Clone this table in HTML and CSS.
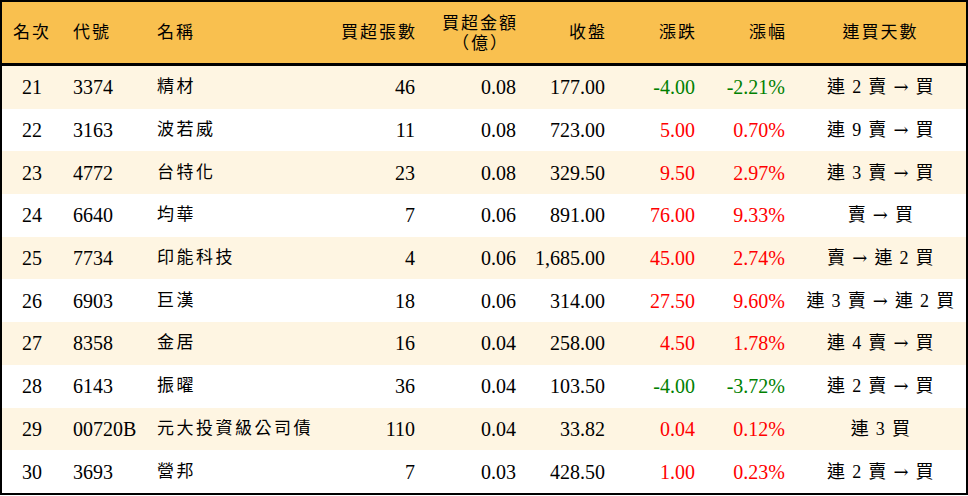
FILE: index.html
```html
<!DOCTYPE html>
<html lang="zh-Hant">
<head>
<meta charset="utf-8">
<link rel="stylesheet" href="styles.css">
</head>
<body>
<table class="board">
  <colgroup>
    <col class="c-rank"><col class="c-code"><col class="c-name"><col class="c-vol"><col class="c-amt"><col class="c-close"><col class="c-chg"><col class="c-pct"><col class="c-days">
  </colgroup>
  <thead>
    <tr>
      <th class="ctr">名次</th>
      <th class="lft">代號</th>
      <th class="lft name">名稱</th>
      <th class="rgt">買超張數</th>
      <th class="rgt two">買超金額<br><span class="unit">（億）</span></th>
      <th class="rgt">收盤</th>
      <th class="rgt">漲跌</th>
      <th class="rgt">漲幅</th>
      <th class="ctr">連買天數</th>
    </tr>
  </thead>
  <tbody>
    <tr><td class="ctr">21</td><td class="lft">3374</td><td class="lft name">精材</td><td class="rgt">46</td><td class="rgt">0.08</td><td class="rgt">177.00</td><td class="rgt down">-4.00</td><td class="rgt down">-2.21%</td><td class="ctr days">連 2 賣 <span class="arr">→</span> 買</td></tr>
    <tr><td class="ctr">22</td><td class="lft">3163</td><td class="lft name">波若威</td><td class="rgt">11</td><td class="rgt">0.08</td><td class="rgt">723.00</td><td class="rgt up">5.00</td><td class="rgt up">0.70%</td><td class="ctr days">連 9 賣 <span class="arr">→</span> 買</td></tr>
    <tr><td class="ctr">23</td><td class="lft">4772</td><td class="lft name">台特化</td><td class="rgt">23</td><td class="rgt">0.08</td><td class="rgt">329.50</td><td class="rgt up">9.50</td><td class="rgt up">2.97%</td><td class="ctr days">連 3 賣 <span class="arr">→</span> 買</td></tr>
    <tr><td class="ctr">24</td><td class="lft">6640</td><td class="lft name">均華</td><td class="rgt">7</td><td class="rgt">0.06</td><td class="rgt">891.00</td><td class="rgt up">76.00</td><td class="rgt up">9.33%</td><td class="ctr days">賣 <span class="arr">→</span> 買</td></tr>
    <tr><td class="ctr">25</td><td class="lft">7734</td><td class="lft name">印能科技</td><td class="rgt">4</td><td class="rgt">0.06</td><td class="rgt">1,685.00</td><td class="rgt up">45.00</td><td class="rgt up">2.74%</td><td class="ctr days">賣 <span class="arr">→</span> 連 2 買</td></tr>
    <tr><td class="ctr">26</td><td class="lft">6903</td><td class="lft name">巨漢</td><td class="rgt">18</td><td class="rgt">0.06</td><td class="rgt">314.00</td><td class="rgt up">27.50</td><td class="rgt up">9.60%</td><td class="ctr days">連 3 賣 <span class="arr">→</span> 連 2 買</td></tr>
    <tr><td class="ctr">27</td><td class="lft">8358</td><td class="lft name">金居</td><td class="rgt">16</td><td class="rgt">0.04</td><td class="rgt">258.00</td><td class="rgt up">4.50</td><td class="rgt up">1.78%</td><td class="ctr days">連 4 賣 <span class="arr">→</span> 買</td></tr>
    <tr><td class="ctr">28</td><td class="lft">6143</td><td class="lft name">振曜</td><td class="rgt">36</td><td class="rgt">0.04</td><td class="rgt">103.50</td><td class="rgt down">-4.00</td><td class="rgt down">-3.72%</td><td class="ctr days">連 2 賣 <span class="arr">→</span> 買</td></tr>
    <tr><td class="ctr">29</td><td class="lft">00720B</td><td class="lft name">元大投資級公司債</td><td class="rgt">110</td><td class="rgt">0.04</td><td class="rgt">33.82</td><td class="rgt up">0.04</td><td class="rgt up">0.12%</td><td class="ctr days">連 3 買</td></tr>
    <tr><td class="ctr">30</td><td class="lft">3693</td><td class="lft name">營邦</td><td class="rgt">7</td><td class="rgt">0.03</td><td class="rgt">428.50</td><td class="rgt up">1.00</td><td class="rgt up">0.23%</td><td class="ctr days">連 2 賣 <span class="arr">→</span> 買</td></tr>
  </tbody>
</table>
</body>
</html>
```
FILE: styles.css
```css
html, body {
  margin: 0;
  padding: 0;
  background: #ffffff;
}

.board {
  border-collapse: separate;
  border-spacing: 0;
  table-layout: fixed;
  width: 968px;
  border: 2px solid #000;
  font-family: "Liberation Serif", "Noto Sans CJK TC", serif;
  font-size: 20px;
  color: #000;
}

.c-rank { width: 60px; }
.c-code { width: 85px; }
.c-name { width: 183px; }
.c-vol { width: 95px; }
.c-amt { width: 101px; }
.c-close { width: 89px; }
.c-chg { width: 90px; }
.c-pct { width: 90px; }
.c-days { width: 171px; }

th, td {
  padding: 0;
  white-space: nowrap;
  overflow: hidden;
}

thead th {
  background: #f9c04f;
  height: 59px;
  border-bottom: 3px solid #000;
  font-weight: normal;
  font-size: 17px;
  letter-spacing: 2px;
  line-height: 20px;
  vertical-align: middle;
}

thead th.two {
  padding-top: 2px;
}

.unit {
  display: inline-block;
  margin-right: 9px;
}

tbody td {
  height: 42.7px;
  vertical-align: middle;
  line-height: 20px;
}

tbody tr:nth-child(odd) td {
  background: #fef5e2;
}

tbody tr:nth-child(even) td {
  background: #ffffff;
}

.ctr { text-align: center; }
.lft { text-align: left; padding-left: 11px; }
.lft.name { padding-left: 10px; }
.rgt { text-align: right; padding-right: 10px; }
thead th.rgt { padding-right: 8px; }

.name {
  font-size: 17px;
  letter-spacing: 2.5px;
}

thead th.name {
  letter-spacing: 2px;
}

.days {
  font-size: 18px;
  letter-spacing: 0.3px;
  word-spacing: 2px;
}

.arr {
  font-family: "DejaVu Serif", serif;
  font-size: 18px;
}

.up { color: #ff0000; }
.down { color: #008000; }
```
